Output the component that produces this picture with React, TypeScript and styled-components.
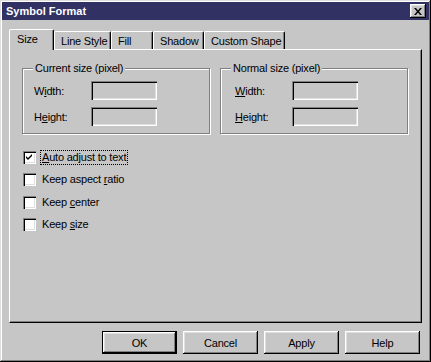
import React from "react";
import styled, { createGlobalStyle, css } from "styled-components";

const BG = "#c6c6c6";
const DARK = "#808080";
const LIGHT = "#dfdfdf";

const Global = createGlobalStyle`
  html, body { margin: 0; padding: 0; background: ${BG}; }
  body { font-family: "Liberation Sans", Arial, sans-serif; font-size: 11px; color: #000; }
  * { box-sizing: border-box; }
`;

const Window = styled.div`
  width: 431px;
  height: 362px;
  padding: 2px;
  background: ${BG};
  display: flex;
  flex-direction: column;
  box-shadow: inset -1px -1px #000, inset 1px 1px ${LIGHT}, inset -2px -2px ${DARK}, inset 2px 2px #fff;
  letter-spacing: -0.2px;
`;

const TitleBar = styled.div`
  height: 18px;
  background: #313163;
  display: flex;
  align-items: center;
  padding: 0 3px 0 4px;
`;

const TitleText = styled.span`
  color: #fff;
  font-weight: bold;
  font-size: 11px;
  letter-spacing: 0;
`;

const CloseButton = styled.div`
  margin-left: auto;
  width: 16px;
  height: 14px;
  background: ${BG};
  display: flex;
  align-items: center;
  justify-content: center;
  box-shadow: inset -1px -1px #000, inset 1px 1px #fff, inset -2px -2px ${DARK}, inset 2px 2px ${LIGHT};
`;

const Content = styled.div`
  padding: 9px 7px 0 7px;
  display: flex;
  flex-direction: column;
`;

const TabStrip = styled.div`
  display: flex;
  align-items: flex-end;
  height: 20px;
`;

const Tab = styled.div<{ $w: number; $active?: boolean }>`
  width: ${(p) => p.$w}px;
  height: 18px;
  padding-left: 6px;
  display: flex;
  align-items: center;
  background: ${BG};
  border-top: 1px solid #fff;
  border-left: 1px solid #fff;
  border-right: 1px solid #000;
  border-top-left-radius: 2px;
  border-top-right-radius: 2px;
  box-shadow: inset -1px 0 ${DARK};
  white-space: nowrap;
  ${(p) =>
    p.$active &&
    css`
      height: 21px;
      margin-bottom: -1px;
      padding-left: 7px;
      padding-bottom: 3px;
      position: relative;
      z-index: 1;
    `}
`;

const Panel = styled.div`
  height: 274px;
  border: 1px solid;
  border-color: #fff #000 #000 #fff;
  box-shadow: inset -1px -1px ${DARK};
  padding: 18px 13px 0 12px;
  display: flex;
  flex-direction: column;
`;

const GroupRow = styled.div`
  display: flex;
  gap: 10px;
`;

const GroupBox = styled.div<{ $pad: number }>`
  position: relative;
  width: 188px;
  height: 66px;
  border: 1px solid ${DARK};
  box-shadow: inset 1px 1px #fff, 1px 1px #fff;
  padding: 12px 0 0 ${(p) => p.$pad}px;
  display: flex;
  flex-direction: column;
  gap: 7px;
`;

const Legend = styled.span`
  position: absolute;
  top: -8px;
  left: 10px;
  padding: 0 2px;
  background: ${BG};
  line-height: 14px;
  white-space: nowrap;
`;

const FieldRow = styled.div`
  display: grid;
  grid-template-columns: 57px 66px;
  align-items: center;
`;

const Input = styled.div`
  width: 66px;
  height: 19px;
  background: ${BG};
  box-shadow: inset 1px 1px ${DARK}, inset 2px 2px #000, inset -1px -1px #fff, inset -2px -2px ${LIGHT};
`;

const Mn = styled.u`
  text-decoration: underline;
  text-underline-offset: 1px;
`;

const CheckList = styled.div`
  margin-top: 17px;
  display: flex;
  flex-direction: column;
  gap: 9.4px;
  padding-left: 1px;
`;

const CheckRow = styled.div`
  display: flex;
  align-items: center;
  height: 13px;
  gap: 4px;
`;

const Box = styled.div`
  width: 13px;
  height: 13px;
  background: #fff;
  display: flex;
  align-items: center;
  justify-content: center;
  box-shadow: inset 1px 1px ${DARK}, inset 2px 2px #000, inset -1px -1px #fff, inset -2px -2px ${LIGHT};
`;

const CheckLabel = styled.span<{ $focus?: boolean }>`
  padding: 0 1px;
  line-height: 13px;
  white-space: nowrap;
  border: 1px dotted ${(p) => (p.$focus ? "#000" : "transparent")};
`;

const ButtonRow = styled.div`
  margin-top: 8px;
  display: flex;
  justify-content: flex-end;
  gap: 6px;
  padding-right: 2px;
`;

const Button = styled.div<{ $default?: boolean }>`
  width: 75px;
  height: 23px;
  display: flex;
  align-items: center;
  justify-content: center;
  background: ${BG};
  box-shadow: inset -1px -1px #000, inset 1px 1px #fff, inset -2px -2px ${DARK}, inset 2px 2px ${LIGHT};
  ${(p) =>
    p.$default &&
    css`
      border: 1px solid #000;
    `}
`;

const CheckMark = () => (
  <svg width="7" height="7" viewBox="0 0 7 7">
    <path d="M0 2 L2 4 L6 0 L6 2 L2 6 L0 4 Z" fill="#000" />
  </svg>
);

const CloseGlyph = () => (
  <svg width="8" height="7" viewBox="0 0 8 7">
    <path d="M0 0 H2 L4 2.5 L6 0 H8 L5 3.5 L8 7 H6 L4 4.5 L2 7 H0 L3 3.5 Z" fill="#000" />
  </svg>
);

const tabs = [
  { label: "Size", w: 45, active: true },
  { label: "Line Style", w: 57 },
  { label: "Fill", w: 42 },
  { label: "Shadow", w: 51 },
  { label: "Custom Shape", w: 81 },
];

export default function App() {
  return (
    <>
      <Global />
      <Window>
        <TitleBar>
          <TitleText>Symbol Format</TitleText>
          <CloseButton>
            <CloseGlyph />
          </CloseButton>
        </TitleBar>
        <Content>
          <TabStrip>
            {tabs.map((t) => (
              <Tab key={t.label} $w={t.w} $active={t.active}>
                {t.label}
              </Tab>
            ))}
          </TabStrip>
          <Panel>
            <GroupRow>
              <GroupBox $pad={11}>
                <Legend>Current size (pixel)</Legend>
                <FieldRow>
                  <span>
                    W<Mn>i</Mn>dth:
                  </span>
                  <Input />
                </FieldRow>
                <FieldRow>
                  <span>
                    H<Mn>e</Mn>ight:
                  </span>
                  <Input />
                </FieldRow>
              </GroupBox>
              <GroupBox $pad={14}>
                <Legend>Normal size (pixel)</Legend>
                <FieldRow>
                  <span>
                    <Mn>W</Mn>idth:
                  </span>
                  <Input />
                </FieldRow>
                <FieldRow>
                  <span>
                    <Mn>H</Mn>eight:
                  </span>
                  <Input />
                </FieldRow>
              </GroupBox>
            </GroupRow>
            <CheckList>
              <CheckRow>
                <Box>
                  <CheckMark />
                </Box>
                <CheckLabel $focus>
                  <Mn>A</Mn>uto adjust to text
                </CheckLabel>
              </CheckRow>
              <CheckRow>
                <Box />
                <CheckLabel>
                  Keep aspect <Mn>r</Mn>atio
                </CheckLabel>
              </CheckRow>
              <CheckRow>
                <Box />
                <CheckLabel>
                  Keep <Mn>c</Mn>enter
                </CheckLabel>
              </CheckRow>
              <CheckRow>
                <Box />
                <CheckLabel>
                  Keep <Mn>s</Mn>ize
                </CheckLabel>
              </CheckRow>
            </CheckList>
          </Panel>
          <ButtonRow>
            <Button $default>OK</Button>
            <Button>Cancel</Button>
            <Button>Apply</Button>
            <Button>Help</Button>
          </ButtonRow>
        </Content>
      </Window>
    </>
  );
}
